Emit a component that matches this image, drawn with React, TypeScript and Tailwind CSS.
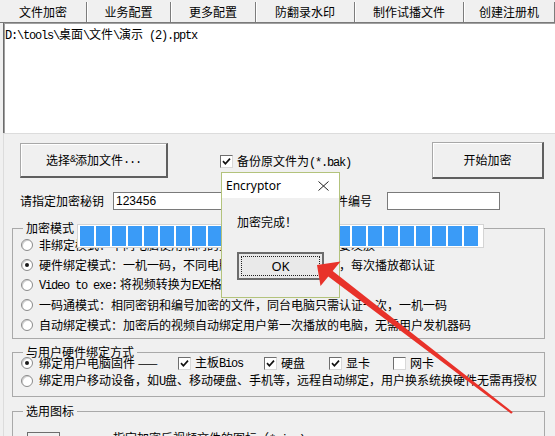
import type { ReactNode } from 'react';

const cjk = "font-['Noto_Sans_CJK_SC','Noto_Sans',sans-serif]";
const mono = "font-['Liberation_Mono','Noto_Sans_CJK_SC',monospace] tracking-[-1.2px]";

const tabs = [
  { label: '文件加密', w: 'w-[87px]' },
  { label: '业务配置', w: 'w-[84px]' },
  { label: '更多配置', w: 'w-[85px]' },
  { label: '防翻录水印', w: 'w-[99px]' },
  { label: '制作试播文件', w: 'w-[109px]' },
  { label: '创建注册机', w: 'w-[91px]' },
];

function M({ children }: { children: ReactNode }) {
  return <span className={mono}>{children}</span>;
}

function Radio({ checked }: { checked?: boolean }) {
  return (
    <span className="flex h-[12px] w-[12px] shrink-0 items-center justify-center rounded-full border border-[#8a8a8a] bg-white shadow-[inset_1px_1px_0_#d0d0d0]">
      {checked && <span className="h-[4px] w-[4px] rounded-full bg-[#1a1a1a]" />}
    </span>
  );
}

function Check({ checked }: { checked?: boolean }) {
  return (
    <span className="flex h-[13px] w-[13px] shrink-0 items-center justify-center border border-[#6e6e6e] border-b-[#d8d8d8] border-r-[#d8d8d8] bg-white">
      {checked && (
        <svg width="9" height="9" viewBox="0 0 9 9">
          <path d="M1 4.2 L3.4 6.8 L8 1.6" stroke="#111" strokeWidth="1.7" fill="none" />
        </svg>
      )}
    </span>
  );
}

function Btn({ className, children }: { className: string; children: ReactNode }) {
  return (
    <div
      className={`flex items-center justify-center border border-[#a8a8a8] border-b-2 border-r-2 border-b-[#5f5f5f] border-r-[#5f5f5f] bg-[#f0f0f0] shadow-[inset_1px_1px_0_#ffffff] ${className}`}
    >
      {children}
    </div>
  );
}

function Row({ checked, children }: { checked?: boolean; children: ReactNode }) {
  return (
    <div className="flex h-[20px] items-center gap-[6px] whitespace-nowrap">
      <Radio checked={checked} />
      <span>{children}</span>
    </div>
  );
}

// Windows-style group box: title sits in a gap of the top line
function Group({
  title,
  className,
  bodyClass,
  children,
}: {
  title: string;
  className: string;
  bodyClass: string;
  children: ReactNode;
}) {
  return (
    <div className={`ml-[8px] mr-[10px] ${className}`}>
      <div className="flex h-[14px]">
        <div className="mt-[7px] w-[11px] border-l border-t border-[#a9a9a9]" />
        <span className="px-[3px] leading-[14px]">{title}</span>
        <div className="mt-[7px] flex-1 border-r border-t border-[#a9a9a9]" />
      </div>
      <div className={`border-b border-l border-r border-[#a9a9a9] ${bodyClass}`}>{children}</div>
    </div>
  );
}

export default function App() {
  return (
    <div
      className={`relative h-[436px] w-[555px] overflow-hidden bg-[#f0f0f0] text-[12px] leading-[14px] text-black ${cjk}`}
    >
      {/* Tabs */}
      <div className="flex h-[23px] border-b border-[#7a7a7a]">
        {tabs.map((t) => (
          <div
            key={t.label}
            className={`${t.w} mt-[2px] flex h-[20px] items-center justify-center border-r border-r-[#7c7c7c] shadow-[1px_0_0_#ffffff]`}
          >
            {t.label}
          </div>
        ))}
      </div>

      {/* File list */}
      <div className="ml-[3px] h-[110px] border-l border-[#6b6b6b] bg-white pl-[1px] pt-[4px] shadow-[inset_1px_1px_0_#a0a0a0]">
        <M>D:\tools\</M>桌面<M>\</M>文件<M>\</M>演示<M> (2).pptx</M>
      </div>

      {/* Settings panel */}
      <div className="ml-[3px] border-l border-t border-[#dcdcdc] pt-[8px]">
        <div className="flex h-[37px] items-center pl-[16px] pr-[11px]">
          <Btn className="h-[35px] w-[148px]">
            选择<span className={`${mono} text-[10px]`}>&amp;</span>添加文件<M>...</M>
          </Btn>
          <div className="ml-[52px] flex items-center gap-[4px] pt-[2px]">
            <Check checked />
            <span>
              备份原文件为<M>(*.bak)</M>
            </span>
          </div>
          <Btn className="ml-auto h-[37px] w-[112px]">开始加密</Btn>
        </div>

        <div className="mt-[13px] flex h-[18px] items-center pl-[16px]">
          <span>请指定加密秘钥</span>
          <div className="ml-[9px] flex h-[18px] w-[197px] items-center border border-[#7a7a7a] bg-white pl-[2px] font-['Liberation_Sans',sans-serif]">
            123456
          </div>
          <span className="ml-[14px]">文件编号</span>
          <div className="ml-[15px] h-[18px] w-[113px] border border-[#7a7a7a] bg-white" />
        </div>

        <Group title="加密模式" className="mt-[11px]" bodyClass="pb-[3px] pl-[8px]">
          <Row>非绑定模式：不同电脑使用相同的播放密码，播放密码需要发放</Row>
          <Row checked>硬件绑定模式：一机一码，不同电脑使用不同的播放密码，每次播放都认证</Row>
          <Row>
            <M>Video to exe:</M> 将视频转换为<M>EXE</M>格式，可直接播放
          </Row>
          <Row>一码通模式：相同密钥和编号加密的文件，同台电脑只需认证一次，一机一码</Row>
          <Row>自动绑定模式：加密后的视频自动绑定用户第一次播放的电脑，无需用户发机器码</Row>
        </Group>

        <Group title="与用户硬件绑定方式" className="mt-[6px]" bodyClass="-mt-[5px] pb-[6px] pl-[8px]">
          <div className="flex h-[18px] items-center whitespace-nowrap">
            <Radio checked />
            <span className="ml-[6px] w-[139px]">绑定用户电脑固件 ——</span>
            <div className="flex w-[86px] items-center gap-[4px]">
              <Check checked />
              <span>
                主板<M>Bios</M>
              </span>
            </div>
            <div className="flex w-[65px] items-center gap-[4px]">
              <Check checked />
              <span>硬盘</span>
            </div>
            <div className="flex w-[64px] items-center gap-[4px]">
              <Check checked />
              <span>显卡</span>
            </div>
            <div className="flex items-center gap-[4px]">
              <Check />
              <span>网卡</span>
            </div>
          </div>
          <div className="flex h-[18px] items-center gap-[6px] whitespace-nowrap">
            <Radio />
            <span>
              绑定用户移动设备，如<M>U</M>盘、移动硬盘、手机等，远程自动绑定，用户换系统换硬件无需再授权
            </span>
          </div>
        </Group>

        <Group title="选用图标" className="mt-[7px]" bodyClass="h-[50px] pl-[14px]">
          <div className="flex items-start">
            <div className="mt-[14px] h-[30px] w-[33px] border border-[#6e6e6e] bg-[#f0f0f0]" />
            <span className="ml-[53px] mt-[13px] whitespace-nowrap">
              指定加密后视频文件的图标（<M>*.ico)</M>
            </span>
          </div>
        </Group>
      </div>

      {/* Progress bar overlay */}
      <div className="absolute left-[77px] top-[224px] flex h-[24px] w-[407px] gap-[2px] border border-[#d4d4d4] bg-white py-[1px] pl-[2px]">
        {Array.from({ length: 25 }).map((_, i) => (
          <div key={i} className="h-full w-[14px] bg-[#3a9bf7]" />
        ))}
      </div>

      {/* Message box */}
      <div className="absolute left-[221px] top-[172px] flex h-[126px] w-[119px] flex-col border border-[#b3c37c] bg-[#f0f0f0]">
        <div className="flex h-[25px] items-center justify-between bg-white pl-[4px] pr-[10px]">
          <span className="font-['Noto_Sans',sans-serif] text-[12px]">Encryptor</span>
          <svg width="11" height="10" viewBox="0 0 11 10">
            <path d="M0.5 0.5 L10.5 9.5 M10.5 0.5 L0.5 9.5" stroke="#222" strokeWidth="1" />
          </svg>
        </div>
        <div className="pl-[15px] pt-[17px]">加密完成！</div>
        <div className="ml-[15px] mt-[23px] flex h-[28px] w-[87px] items-center justify-center border-2 border-[#6c6c6c] bg-[#e9e9e9] p-[2px]">
          <div className="flex h-full w-full items-center justify-center border border-dotted border-[#222] font-['Noto_Sans',sans-serif] text-[13px]">
            OK
          </div>
        </div>
      </div>

      {/* Red arrow */}
      <svg className="pointer-events-none absolute left-0 top-0" width="555" height="436" viewBox="0 0 555 436">
        <polygon
          points="317,265 340.5,261.5 332.7,271 512.8,412.3 511.2,413.7 328.3,276.5 320.5,286"
          fill="#e8322a"
        />
      </svg>
    </div>
  );
}
